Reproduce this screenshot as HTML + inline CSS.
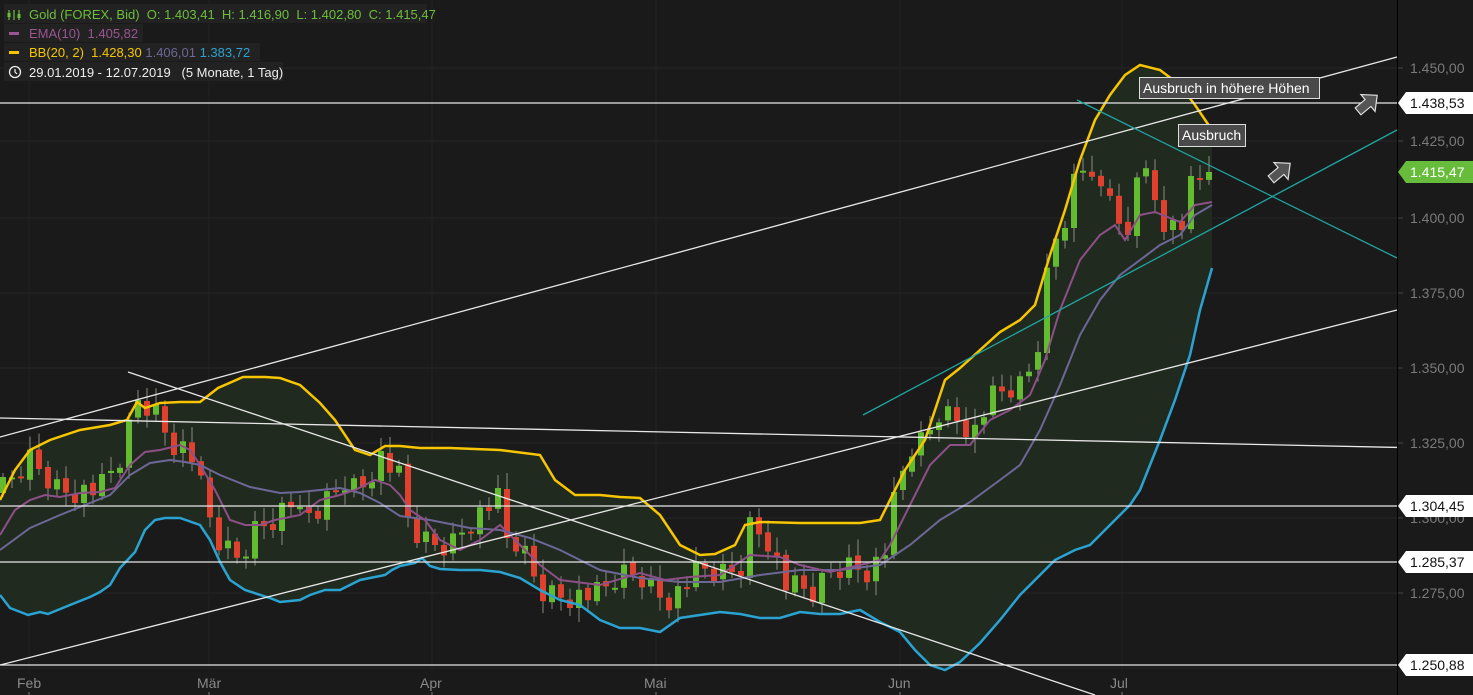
<!DOCTYPE html>
<html><head><meta charset="utf-8"><style>
html,body{margin:0;padding:0;background:#1a1a1a;width:1473px;height:695px;overflow:hidden}
svg{display:block}
text{font-family:"Liberation Sans",sans-serif;white-space:pre}
</style></head><body>
<svg id="c" width="1473" height="695" xmlns="http://www.w3.org/2000/svg"></svg>
<script>
const S=document.getElementById('c');let h='';
h+='<rect width="1473" height="695" fill="#1a1a1a"/>';
[68,141,218,293,368,443,518,593,668].forEach(y=>h+=`<line x1="0" y1="${y}" x2="1397" y2="${y}" stroke="#252525"/>`);
[29,209,432,656,900,1122].forEach(x=>h+=`<line x1="${x}" y1="0" x2="${x}" y2="670" stroke="#232323"/>`);
function P(a){return a.map(p=>p.join(',')).join(' ');}
const up=[[0,500],[15,470],[30,450],[50,440],[80,430],[110,425],[127,420],[137,402],[145,408],[160,403],[180,402],[200,402],[218,388],[243,377],[265,377],[280,378],[300,385],[320,403],[335,420],[355,450],[370,455],[385,446],[400,446],[420,448],[450,448],[500,450],[540,455],[555,480],[575,495],[600,495],[620,497],[640,498],[660,515],[680,545],[700,555],[715,554],[735,545],[745,525],[760,522],[800,523],[860,523],[880,520],[890,500],[905,470],[925,440],[945,380],[960,368],[980,350],[1000,332],[1020,320],[1035,305],[1050,255],[1065,210],[1080,160],[1095,120],[1110,95],[1125,75],[1140,65],[1160,70],[1180,85],[1195,105],[1212,130]];
const lo=[[0,595],[10,608],[28,615],[40,612],[48,614],[70,605],[90,597],[100,592],[110,585],[120,568],[135,552],[145,530],[155,520],[165,518],[180,518],[200,525],[210,540],[220,562],[230,580],[245,590],[270,598],[280,602],[300,600],[310,595],[325,590],[340,590],[350,585],[360,580],[375,577],[385,575],[392,570],[400,566],[415,563],[422,558],[430,566],[440,569],[460,570],[480,570],[500,572],[520,578],[540,590],[560,600],[580,605],[600,620],[620,628],[640,628],[660,632],[680,618],[700,615],[720,612],[740,614],[760,618],[780,618],[800,612],[820,614],[840,614],[860,610],[880,622],[900,632],[915,650],[930,665],[945,670],[960,662],[980,643],[1000,620],[1020,595],[1040,575],[1055,560],[1075,550],[1090,545],[1105,530],[1120,515],[1130,505],[1140,490],[1150,465],[1160,440],[1175,400],[1190,355],[1200,310],[1212,268]];
const mid=[[0,550],[30,528],[60,515],[90,503],[110,495],[130,475],[150,463],[170,460],[185,462],[200,465],[220,475],[250,487],[280,493],[300,492],[340,488],[360,493],[380,503],[400,516],[430,520],[470,528],[500,530],[530,538],[560,550],[600,570],[640,578],[680,582],[720,582],[760,575],[800,570],[840,570],[880,565],[910,545],[940,520],[970,502],[1000,480],[1020,465],[1040,430],[1060,385],[1080,335],[1100,300],[1120,275],[1140,260],[1160,245],[1180,235],[1195,215],[1212,205]];
const ema=[[0,535],[15,510],[30,500],[45,495],[60,497],[80,493],[100,492],[115,488],[130,465],[145,452],[160,450],[180,445],[190,450],[200,465],[215,490],[230,520],[245,525],[260,525],[275,520],[300,515],[320,500],[340,495],[355,490],[375,480],[390,485],[400,495],[410,510],[425,520],[440,540],[460,550],[480,540],[500,525],[520,545],[540,565],[560,580],[600,585],[640,573],[665,580],[690,577],[720,575],[750,555],[780,557],[800,565],[830,572],[860,565],[880,560],[890,545],[910,505],[930,465],[950,445],[970,445],[990,420],[1010,410],[1030,395],[1045,360],[1060,310],[1080,260],[1100,235],[1115,225],[1125,240],[1140,215],[1155,212],[1170,218],[1180,222],[1195,205],[1212,202]];
h+=`<polygon points="${P(up)} ${P(lo.slice().reverse())}" fill="#212a1f"/>`;
const ca=[[3,490],[30,460],[60,490],[100,490],[120,460],[138,400],[155,410],[170,440],[190,450],[210,520],[220,545],[240,560],[253,530],[270,520],[290,500],[300,520],[320,510],[345,480],[360,490],[380,455],[400,480],[410,530],[430,545],[450,545],[470,520],[490,505],[500,500],[505,540],[520,545],[540,590],[560,595],[600,595],[620,575],[640,575],[665,600],[680,590],[700,570],[720,575],[740,570],[750,525],[770,540],[785,585],[800,590],[815,595],[830,570],[850,565],[870,570],[885,550],[895,500],[910,450],[925,440],[940,410],[960,420],[975,430],[990,400],[1010,390],[1025,385],[1040,335],[1050,250],[1065,215],[1080,155],[1090,190],[1110,188],[1125,265],[1135,165],[1150,180],[1160,215],[1170,225],[1185,225],[1195,165],[1205,200],[1212,172]];
function iv(a,x){for(let i=1;i<a.length;i++){if(x<=a[i][0]){const t=(x-a[i-1][0])/(a[i][0]-a[i-1][0]);return a[i-1][1]+t*(a[i][1]-a[i-1][1]);}}return a[a.length-1][1];}
let prev=495;
for(let i=0;i<=134;i++){const x=3+9*i;let c=iv(ca,x)+(((i*37)%11)-5)*2.6;if(i==134)c=172;let o=prev+(((i*13)%5)-2);
 const t=Math.min(o,c),b=Math.max(o,c);const g=c<o;const col=g?'#63bb2f':'#e0412f';
 const wt=t-4-((i*29)%13),wb=b+4+((i*17)%11);
 h+=`<line x1="${x}" y1="${wt}" x2="${x}" y2="${wb}" stroke="#8a8a80" stroke-width="1"/>`;
 h+=`<rect x="${x-3}" y="${t}" width="6" height="${Math.max(2,b-t)}" fill="${col}"/>`;prev=c;}
h+=`<polyline points="${P(mid)}" fill="none" stroke="#6d6798" stroke-width="2"/>`;
h+=`<polyline points="${P(ema)}" fill="none" stroke="#8d4f88" stroke-width="2"/>`;
h+=`<polyline points="${P(up)}" fill="none" stroke="#f7c600" stroke-width="2.5"/>`;
h+=`<polyline points="${P(lo)}" fill="none" stroke="#2aa3d2" stroke-width="2.5"/>`;
const W='#e8e8e8';
[[0,103,1397,103],[0,506,1397,506],[0,562,1397,562],[0,665,1397,665],[0,418,1473,449],[0,437,1397,57],[0,665,1397,310],[128,372,1095,695]].forEach(l=>h+=`<line x1="${l[0]}" y1="${l[1]}" x2="${l[2]}" y2="${l[3]}" stroke="${W}" stroke-width="1.3"/>`);
h+=`<line x1="1077" y1="100" x2="1397" y2="258" stroke="#1fa6a2" stroke-width="1.3"/>`;
h+=`<line x1="863" y1="415" x2="1397" y2="130" stroke="#1fa6a2" stroke-width="1.3"/>`;
h+=`<rect x="1139.5" y="77.5" width="180" height="21" fill="#4a4a4a" stroke="#ddd"/><text x="1143" y="93" fill="#fff" font-size="14">Ausbruch in höhere Höhen</text>`;
h+=`<rect x="1178.5" y="124.5" width="67" height="22" fill="#4a4a4a" stroke="#ddd"/><text x="1182" y="140" fill="#fff" font-size="14">Ausbruch</text>`;
function arrow(x,y){return `<g transform="translate(${x},${y}) rotate(50)"><polygon points="-4.5,13 4.5,13 4.5,0 11,0 0,-12 -11,0 -4.5,0" fill="#555" stroke="#ddd" stroke-width="1.2"/></g>`;}
h+=arrow(1368,103)+arrow(1281,171);
h+=`<rect x="1398" y="0" width="75" height="695" fill="#1a1a1a"/><line x1="1397.5" y1="0" x2="1397.5" y2="695" stroke="#000"/>`;
[[68,'1.450,00'],[141,'1.425,00'],[218,'1.400,00'],[293,'1.375,00'],[368,'1.350,00'],[443,'1.325,00'],[518,'1.300,00'],[593,'1.275,00']].forEach(a=>h+=`<line x1="1398" y1="${a[0]}" x2="1403" y2="${a[0]}" stroke="#444"/><text x="1410" y="${a[0]+5}" fill="#7a7a7a" font-size="14">${a[1]}</text>`);
function tag(y,t,bg,fg){return `<polygon points="1398,${y} 1406,${y-11} 1473,${y-11} 1473,${y+11} 1406,${y+11}" fill="${bg}"/><text x="1410" y="${y+5}" fill="${fg}" font-size="14">${t}</text>`;}
h+=tag(103,'1.438,53','#fff','#111')+tag(172,'1.415,47','#67bd3b','#fff')+tag(506,'1.304,45','#fff','#111')+tag(562,'1.285,37','#fff','#111')+tag(665,'1.250,88','#fff','#111');
[[29,'Feb'],[209,'Mär'],[432,'Apr'],[656,'Mai'],[900,'Jun'],[1122,'Jul']].forEach(a=>h+=`<text x="${a[0]-12}" y="688" fill="#8a8a8a" font-size="14">${a[1]}</text><line x1="${a[0]}" y1="692" x2="${a[0]}" y2="695" stroke="#777"/>`);
h+=`<rect x="4" y="4" width="423" height="19" fill="#222"/><rect x="4" y="24" width="139" height="18" fill="#222"/><rect x="4" y="43" width="256" height="18" fill="#222"/><rect x="4" y="62" width="279" height="19" fill="#222"/>`;
h+=`<g stroke="#6cbf3c" stroke-width="1.2"><line x1="9" y1="10" x2="9" y2="20"/><line x1="14" y1="10" x2="14" y2="20"/><line x1="19" y1="10" x2="19" y2="20"/></g><rect x="7.5" y="13" width="3" height="4" fill="#6cbf3c"/><rect x="17.5" y="14" width="3" height="4" fill="#6cbf3c"/>`;
h+=`<text x="29" y="19" fill="#6cbf3c" font-size="13">Gold (FOREX, Bid)  O: 1.403,41  H: 1.416,90  L: 1.402,80  C: 1.415,47</text>`;
h+=`<rect x="9" y="32" width="10" height="3" fill="#9a5592"/><text x="29" y="38" fill="#9a5592" font-size="13">EMA(10)  1.405,82</text>`;
h+=`<rect x="9" y="51" width="10" height="3" fill="#f7c600"/><text x="29" y="57" fill="#f7c600" font-size="13">BB(20, 2)  1.428,30 <tspan fill="#6d6798">1.406,01</tspan> <tspan fill="#2aa3d2">1.383,72</tspan></text>`;
h+=`<circle cx="15" cy="72" r="5.5" fill="none" stroke="#eee" stroke-width="1.3"/><polyline points="15,69 15,72 17,74" fill="none" stroke="#eee" stroke-width="1.2"/><text x="29" y="77" fill="#eee" font-size="13">29.01.2019 - 12.07.2019   (5 Monate, 1 Tag)</text>`;
S.innerHTML=h;
</script>
</body></html>
